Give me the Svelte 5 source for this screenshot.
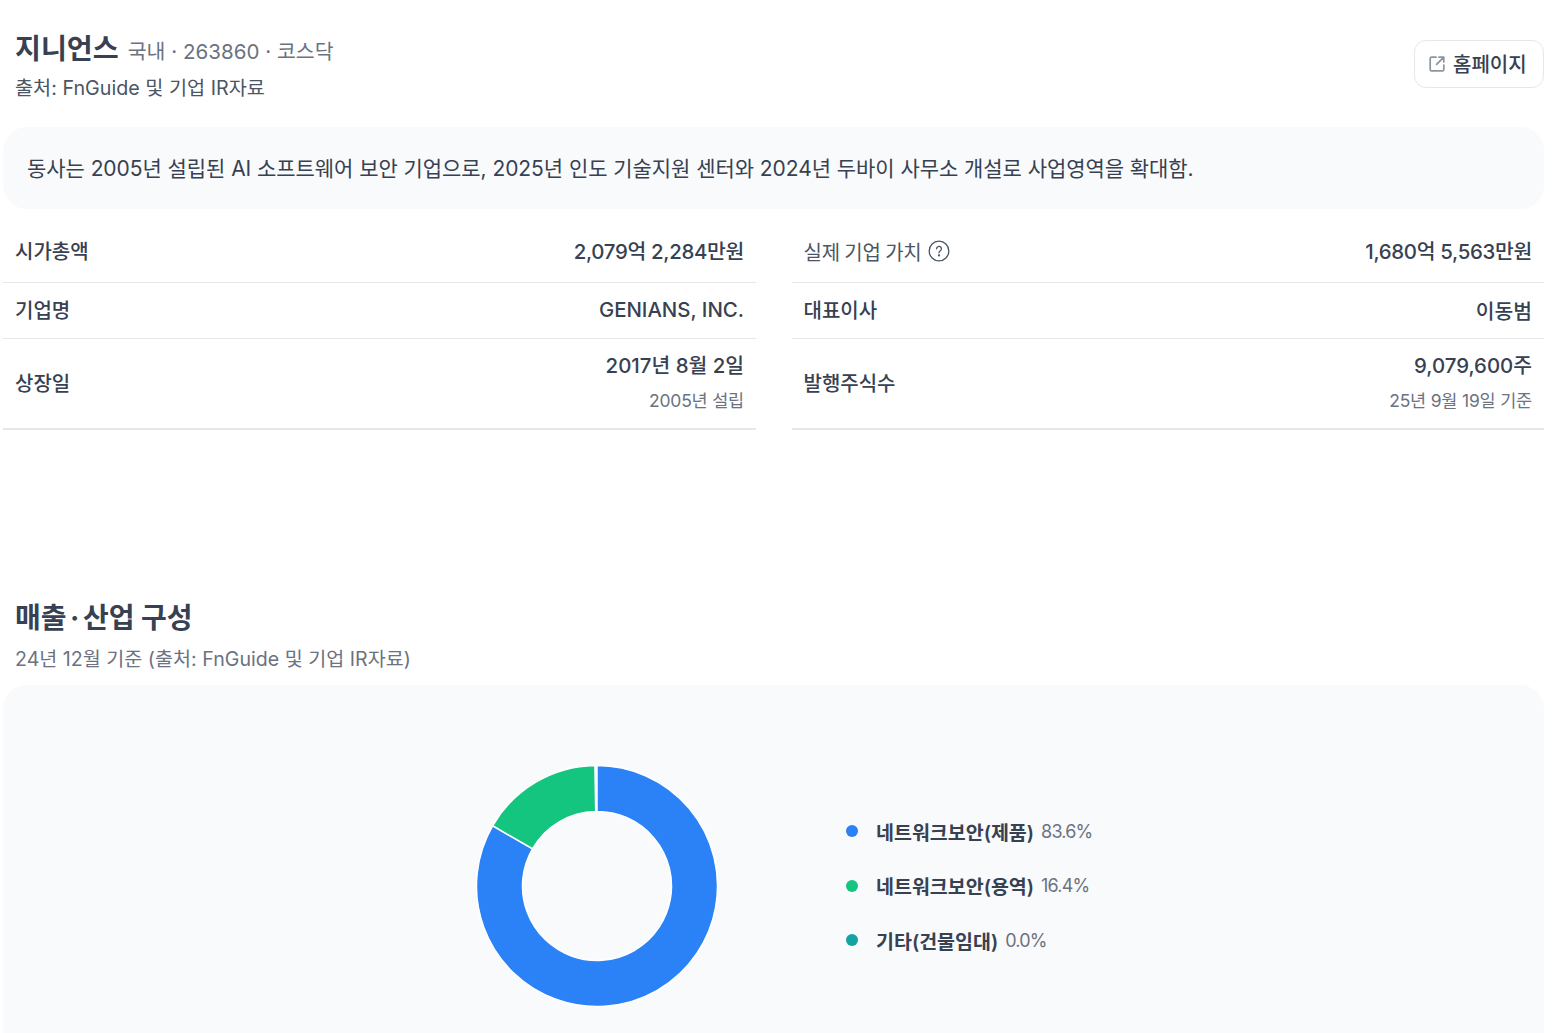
<script>
  const rows = [
    [
      { label: '시가총액', value: '2,079억 2,284만원' },
      { label: '기업명', value: 'GENIANS, INC.' },
      { label: '상장일', value: '2017년 8월 2일', sub: '2005년 설립' }
    ],
    [
      { label: '실제 기업 가치', value: '1,680억 5,563만원', help: true },
      { label: '대표이사', value: '이동범' },
      { label: '발행주식수', value: '9,079,600주', sub: '25년 9월 19일 기준' }
    ]
  ];
  const legend = [
    { name: '네트워크보안(제품)', pct: '83.6%', color: '#2b82f6' },
    { name: '네트워크보안(용역)', pct: '16.4%', color: '#14c57f' },
    { name: '기타(건물임대)', pct: '0.0%', color: '#14a3a3' }
  ];
  function pt(r, deg) {
    const a = (deg * Math.PI) / 180;
    return `${121 + r * Math.sin(a)} ${121 - r * Math.cos(a)}`;
  }
  function arc(a, b) {
    const big = b - a > 180 ? 1 : 0;
    return `M${pt(120.5, a)}A120.5 120.5 0 ${big} 1 ${pt(120.5, b)}L${pt(74.5, b)}A74.5 74.5 0 ${big} 0 ${pt(74.5, a)}Z`;
  }
  const split = 300;
</script>

<main class="page">
  <header class="head">
    <div>
      <div class="title-line">
        <h1>지니언스</h1>
        <span class="meta">국내 · 263860 · 코스닥</span>
      </div>
      <p class="source">출처: FnGuide 및 기업 IR자료</p>
    </div>
    <button class="home">
      <svg width="18" height="18" viewBox="0 0 18 18" fill="none" stroke="#8b95a1" stroke-width="1.7" stroke-linecap="round" stroke-linejoin="round">
        <path d="M8 2.2H3.6a1.4 1.4 0 0 0-1.4 1.4v10.8a1.4 1.4 0 0 0 1.4 1.4h10.8a1.4 1.4 0 0 0 1.4-1.4V10" />
        <path d="M11 2.2h4.8V7M15.6 2.4 8.6 9.4" />
      </svg>
      홈페이지
    </button>
  </header>

  <section class="summary">동사는 2005년 설립된 AI 소프트웨어 보안 기업으로, 2025년 인도 기술지원 센터와 2024년 두바이 사무소 개설로 사업영역을 확대함.</section>

  <section class="tables">
    {#each rows as col}
      <div class="col">
        {#each col as r, i}
          <div class="row r{i}">
            <div class="label" class:soft={r.help}>
              {r.label}
              {#if r.help}
                <svg width="22" height="22" viewBox="0 0 22 22" fill="none" stroke="#4b5563" stroke-width="1.3">
                  <circle cx="11" cy="11" r="9.8" />
                  <path d="M8.6 8.8a2.4 2.4 0 1 1 3.7 2c-.9.6-1.3 1-1.3 2" stroke-linecap="round" />
                  <circle cx="11" cy="15.4" r=".5" fill="#4b5563" />
                </svg>
              {/if}
            </div>
            <div class="val">
              <div class="value">{r.value}</div>
              {#if r.sub}<div class="sub">{r.sub}</div>{/if}
            </div>
          </div>
        {/each}
      </div>
    {/each}
  </section>

  <section class="sales">
    <h2>매출<span class="mid">·</span>산업 구성</h2>
    <p class="basis">24년 12월 기준 (출처: FnGuide 및 기업 IR자료)</p>
    <div class="panel">
      <svg class="donut" width="242" height="242" viewBox="0 0 242 242">
        <path d={arc(0, split)} fill="#2b82f6" stroke="#fff" stroke-width="1.5" />
        <path d={arc(split, 359)} fill="#14c57f" stroke="#fff" stroke-width="1.5" />
      </svg>
      <ul class="legend">
        {#each legend as l}
          <li>
            <span class="dot" style="background:{l.color}"></span>
            <span class="name">{l.name}</span>
            <span class="pct">{l.pct}</span>
          </li>
        {/each}
      </ul>
    </div>
  </section>
</main>

<style>
  :global(body) {
    margin: 0;
    background: #fff;
    overflow: hidden;
  }
  .page {
    box-sizing: border-box;
    width: 1563px;
    height: 1033px;
    overflow: hidden;
    padding: 0 19px 0 3px;
    font-family: Inter, "Noto Sans CJK KR", sans-serif;
    color: #374151;
  }
  .head {
    display: flex;
    justify-content: space-between;
    align-items: center;
    height: 127px;
    padding: 0 0 0 12px;
    box-sizing: border-box;
  }
  .title-line {
    display: flex;
    align-items: baseline;
    gap: 9px;
    height: 36px;
    margin-top: 4px;
  }
  h1 {
    margin: 0;
    font-size: 28.2px;
    font-weight: 700;
    line-height: 36px;
  }
  .meta {
    font-size: 20.5px;
    color: #6b7280;
    letter-spacing: 0.03px;
  }
  .source {
    margin: 8px 0 0;
    font-size: 19.7px;
    line-height: 26px;
    color: #4b5563;
  }
  .home {
    display: flex;
    align-items: center;
    gap: 7px;
    width: 130px;
    height: 48px;
    padding: 0 0 0 13px;
    box-sizing: border-box;
    background: #fff;
    border: 1px solid #e5e7eb;
    border-radius: 12px;
    font: inherit;
    font-size: 20px;
    font-weight: 500;
    color: #374151;
  }
  .summary {
    box-sizing: border-box;
    height: 82px;
    padding: 0 24px 2px;
    display: flex;
    align-items: center;
    background: #f9fafb;
    border-radius: 24px;
    font-size: 21px;
    color: #374151;
    letter-spacing: -0.06px;
  }
  .tables {
    display: grid;
    grid-template-columns: 753px 752px;
    column-gap: 36px;
    margin-top: 16px;
  }
  .col { display: flex; flex-direction: column; }
  .row {
    display: flex;
    justify-content: space-between;
    align-items: center;
    box-sizing: border-box;
    padding: 0 12px;
    border-bottom: 1px solid #e5e7eb;
  }
  .r0 { height: 58px; padding-bottom: 7px; }
  .r1 { height: 56px; padding-bottom: 2px; }
  .r2 { height: 91px; border-bottom-width: 2px; padding-bottom: 2px; }
  .r0 .value { letter-spacing: -0.3px; }
  .r2 .val { margin-bottom: 4px; }
  .col + .col .label { margin-left: -0.5px; }
  .label {
    display: flex;
    align-items: center;
    gap: 6px;
    font-size: 20px;
    font-weight: 500;
    color: #374151;
  }
  .label.soft {
    font-weight: 400;
    color: #4b5563;
    letter-spacing: -0.2px;
    word-spacing: -1px;
    margin-top: 2px;
  }
  .val { text-align: right; }
  .value {
    font-size: 20.4px;
    font-weight: 500;
    color: #374151;
  }
  .sub {
    margin-top: 8px;
    font-size: 17.5px;
    color: #6b7280;
    letter-spacing: -0.2px;
  }
  .sales { margin-top: 170px; }
  h2 {
    margin: 0 0 0 12px;
    font-size: 28px;
    line-height: 36px;
    font-weight: 700;
  }
  .mid { padding: 0 3.5px; }
  .basis {
    margin: 9px 0 0 12px;
    font-size: 19.6px;
    line-height: 28px;
    color: #6b7280;
  }
  .panel {
    display: flex;
    align-items: flex-start;
    height: 400px;
    margin-top: 12px;
    background: #f9fafb;
    border-radius: 24px;
    padding: 80px 0 0 473px;
    box-sizing: border-box;
  }
  .donut { flex: none; }
  .legend {
    list-style: none;
    margin: 52px 0 0 128px;
    padding: 0;
    display: flex;
    flex-direction: column;
    gap: 26.5px;
  }
  .legend li {
    display: flex;
    align-items: center;
    height: 28px;
  }
  .dot {
    width: 12px;
    height: 12px;
    border-radius: 50%;
    margin-right: 18px;
  }
  .name {
    font-size: 19.5px;
    font-weight: 600;
    color: #374151;
    margin-right: 7px;
  }
  .pct {
    font-size: 18px;
    color: #6b7280;
    letter-spacing: -0.8px;
  }
</style>
